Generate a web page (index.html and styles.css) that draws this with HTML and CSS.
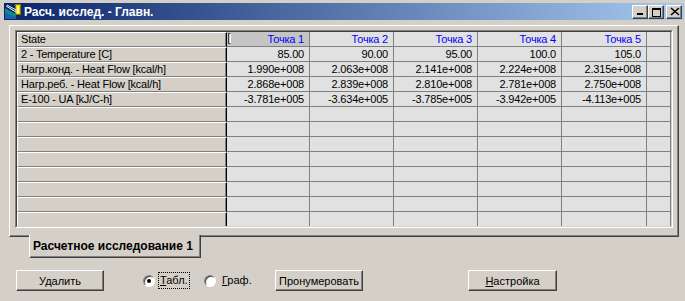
FILE: index.html
```html
<!DOCTYPE html>
<html lang="ru">
<head>
  <meta charset="UTF-8">
  <title>Расч. исслед. - Главн.</title>
  <link rel="stylesheet" href="styles.css">
</head>
<body>
  <div class="window">
    <div class="titlebar">
      <svg class="appicon" width="16" height="16" viewBox="0 0 16 16">
        <rect x="10.5" y="0.5" width="5" height="10" fill="#fffbb0" stroke="#8a7a00"/>
        <rect x="11.5" y="1.5" width="3" height="8" fill="none" stroke="#e8d800"/>
        <polygon points="0,4 11,10 11,15 0,15" fill="#0a8a8a"/>
        <polygon points="0,9 11,13 11,15 0,15" fill="#1f5fa8"/>
        <line x1="1" y1="2" x2="11" y2="8" stroke="#fff"/>
        <line x1="2" y1="1" x2="11" y2="6" stroke="#cfe"/>
      </svg>
      <span class="title">Расч. исслед. - Главн.</span>
      <div class="caps">
        <span class="cap-btn"><svg width="14" height="12" viewBox="0 0 14 12"><rect x="4" y="7" width="6" height="2"/></svg></span>
        <span class="cap-btn"><svg width="14" height="12" viewBox="0 0 14 12"><path d="M3 2h9v9H3z M4 4h7v6H4z" fill-rule="evenodd"/></svg></span>
        <span class="cap-btn close"><svg width="14" height="12" viewBox="0 0 14 12"><path d="M4 2l8 7M12 2l-8 7" stroke="#000" stroke-width="1.6"/></svg></span>
      </div>
    </div>

    <div class="panel">
      <div class="grid">
        <div class="grid-in">
          <div class="row">
            <div class="cell label">State</div>
            <div class="cell head selected"><span class="caret"></span>Точка 1</div>
            <div class="cell head">Точка 2</div>
            <div class="cell head">Точка 3</div>
            <div class="cell head">Точка 4</div>
            <div class="cell head">Точка 5</div>
            <div class="cell"></div>
          </div>
          <div class="row">
            <div class="cell label">2 - Temperature [C]</div>
            <div class="cell">85.00</div>
            <div class="cell">90.00</div>
            <div class="cell">95.00</div>
            <div class="cell">100.0</div>
            <div class="cell">105.0</div>
            <div class="cell"></div>
          </div>
          <div class="row">
            <div class="cell label">Нагр.конд. - Heat Flow [kcal/h]</div>
            <div class="cell">1.990e+008</div>
            <div class="cell">2.063e+008</div>
            <div class="cell">2.141e+008</div>
            <div class="cell">2.224e+008</div>
            <div class="cell">2.315e+008</div>
            <div class="cell"></div>
          </div>
          <div class="row">
            <div class="cell label">Нагр.реб. - Heat Flow [kcal/h]</div>
            <div class="cell">2.868e+008</div>
            <div class="cell">2.839e+008</div>
            <div class="cell">2.810e+008</div>
            <div class="cell">2.781e+008</div>
            <div class="cell">2.750e+008</div>
            <div class="cell"></div>
          </div>
          <div class="row">
            <div class="cell label">E-100 - UA [kJ/C-h]</div>
            <div class="cell">-3.781e+005</div>
            <div class="cell">-3.634e+005</div>
            <div class="cell">-3.785e+005</div>
            <div class="cell">-3.942e+005</div>
            <div class="cell">-4.113e+005</div>
            <div class="cell"></div>
          </div>
          <div class="row"><div class="cell label"></div><div class="cell"></div><div class="cell"></div><div class="cell"></div><div class="cell"></div><div class="cell"></div><div class="cell"></div></div>
          <div class="row"><div class="cell label"></div><div class="cell"></div><div class="cell"></div><div class="cell"></div><div class="cell"></div><div class="cell"></div><div class="cell"></div></div>
          <div class="row"><div class="cell label"></div><div class="cell"></div><div class="cell"></div><div class="cell"></div><div class="cell"></div><div class="cell"></div><div class="cell"></div></div>
          <div class="row"><div class="cell label"></div><div class="cell"></div><div class="cell"></div><div class="cell"></div><div class="cell"></div><div class="cell"></div><div class="cell"></div></div>
          <div class="row"><div class="cell label"></div><div class="cell"></div><div class="cell"></div><div class="cell"></div><div class="cell"></div><div class="cell"></div><div class="cell"></div></div>
          <div class="row"><div class="cell label"></div><div class="cell"></div><div class="cell"></div><div class="cell"></div><div class="cell"></div><div class="cell"></div><div class="cell"></div></div>
          <div class="row"><div class="cell label"></div><div class="cell"></div><div class="cell"></div><div class="cell"></div><div class="cell"></div><div class="cell"></div><div class="cell"></div></div>
          <div class="row"><div class="cell label"></div><div class="cell"></div><div class="cell"></div><div class="cell"></div><div class="cell"></div><div class="cell"></div><div class="cell"></div></div>
        </div>
      </div>
    </div>

    <div class="tabs">
      <div class="tab">Расчетное исследование 1</div>
    </div>

    <div class="controls">
      <button class="btn first">Удалить</button>
      <label class="radio r1"><span class="dot checked"></span><span class="rlabel focus"><u>Т</u>абл.</span></label>
      <label class="radio r2"><span class="dot"></span><span class="rlabel"><u>Г</u>раф.</span></label>
      <button class="btn">Пронумеровать</button>
      <button class="btn last"><u>Н</u>астройка</button>
    </div>
  </div>
</body>
</html>
```

FILE: styles.css
```css
* {
  box-sizing: border-box;
}
body {
  margin: 0;
  background-color: #d4d0c8;
  font-family: "Liberation Sans", Arial, sans-serif;
  font-size: 11px;
  color: #000;
}
.window {
  width: 685px;
  height: 301px;
  padding: 3px 1px 0 4px;
  overflow: hidden;
}
.titlebar {
  display: flex;
  align-items: center;
  height: 17px;
  padding-left: 1px;
  background: linear-gradient(to right, #0a246a, #a6caf0);
}
.appicon {
  display: block;
}
.title {
  margin-left: 3px;
  color: #fff;
  font-weight: bold;
  font-size: 12px;
}
.caps {
  display: flex;
  margin-left: auto;
  margin-right: 2px;
}
.cap-btn {
  width: 16px;
  height: 14px;
  background-color: #d4d0c8;
  border: 1px solid;
  border-color: #fff #404040 #404040 #fff;
  box-shadow: inset -1px -1px #808080;
}
.cap-btn svg {
  display: block;
  shape-rendering: crispEdges;
}
.cap-btn.close {
  margin-left: 2px;
}
.cap-btn.close svg {
  shape-rendering: auto;
}
.panel {
  width: 670px;
  height: 212px;
  margin: 5px 0 0 5px;
  padding: 4px 0 0 5px;
  border: 1px solid;
  border-color: #fff #404040 #404040 #fff;
  box-shadow: inset -1px -1px #808080;
}
.grid {
  width: 658px;
  height: 198px;
  border: 1px solid;
  border-color: #808080 #fff #fff #808080;
}
.grid-in {
  height: 100%;
  border: 1px solid;
  border-color: #404040 #d4d0c8 #d4d0c8 #404040;
  overflow: hidden;
  background-color: #e1e1e1;
}
.row {
  display: grid;
  grid-template-columns: 210px 83px 84px 84px 84px 85px 24px;
  height: 15px;
}
.cell {
  height: 15px;
  padding-right: 5px;
  border-right: 1px solid #808080;
  border-bottom: 1px solid #808080;
  background-color: #e1e1e1;
  text-align: right;
  line-height: 14px;
  white-space: nowrap;
  overflow: hidden;
  letter-spacing: -0.2px;
}
.label {
  padding: 0 0 0 3px;
  background-color: #d4d0c8;
  border-top: 1px solid #fff;
  border-left: 1px solid #fff;
  border-right: 1px solid #000;
  box-shadow: inset -1px 0 #808080;
  text-align: left;
  line-height: 13px;
}
.head {
  color: #0000ff;
}
.selected {
  position: relative;
  background-color: #c4c4c4;
}
.caret {
  position: absolute;
  left: 1px;
  top: 1px;
  width: 3px;
  height: 11px;
  border: 1px solid #404040;
  border-right-color: #fff;
}
.tabs {
  display: flex;
  margin: -2px 0 0 25px;
}
.tab {
  width: 172px;
  height: 23px;
  padding: 4px 0 0 3px;
  background-color: #d4d0c8;
  border-left: 1px solid #fff;
  border-right: 1px solid #404040;
  border-bottom: 1px solid #404040;
  border-bottom-left-radius: 2px;
  box-shadow: inset -1px -1px #808080;
  font-weight: bold;
  font-size: 12px;
}
.controls {
  display: flex;
  align-items: center;
  height: 21px;
  margin-top: 12px;
}
.btn {
  width: 88px;
  height: 21px;
  padding: 0;
  background-color: #d4d0c8;
  border: 1px solid;
  border-color: #fff #404040 #404040 #fff;
  box-shadow: inset -1px -1px #808080;
  font-family: inherit;
  font-size: 11px;
  color: #000;
}
.btn.first {
  margin-left: 12px;
}
.btn.last {
  width: 89px;
  margin-left: 105px;
}
.radio {
  display: flex;
  align-items: center;
}
.r1 {
  width: 61px;
  margin-left: 39px;
}
.r2 {
  width: 71px;
}
.dot {
  position: relative;
  width: 12px;
  height: 12px;
  border-radius: 50%;
  background-color: #fff;
  border: 1px solid;
  border-color: #808080 #fff #fff #808080;
  box-shadow: inset 1px 1px #404040;
}
.dot.checked::after {
  content: "";
  position: absolute;
  left: 3px;
  top: 3px;
  width: 4px;
  height: 4px;
  border-radius: 50%;
  background-color: #000;
}
.rlabel {
  margin-left: 4px;
  padding: 1px 1px 2px;
}
.r2 .rlabel {
  margin-left: 5px;
}
.focus {
  outline: 1px dotted #000;
}
```
